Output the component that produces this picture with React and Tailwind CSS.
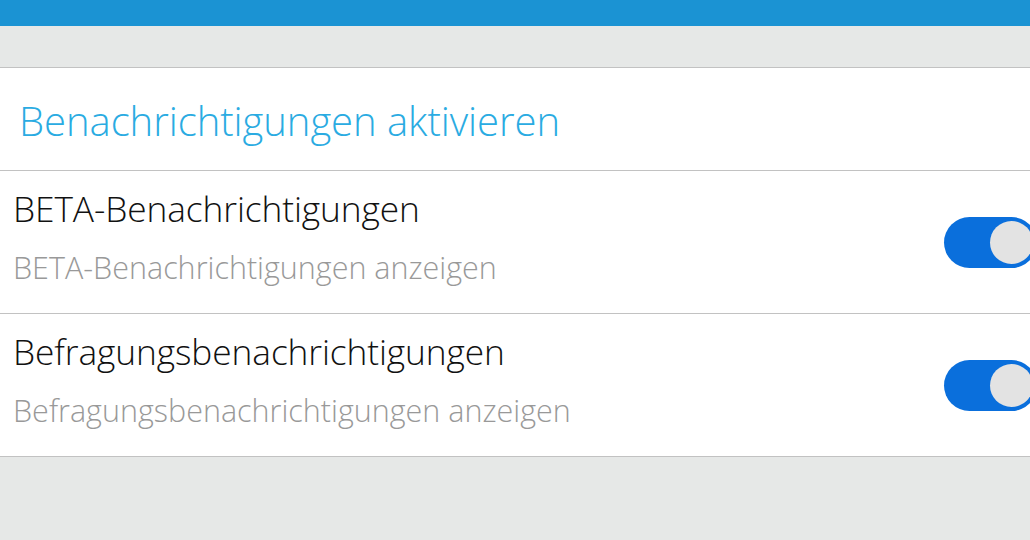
const Toggle = () => (
  <div className="relative mr-[-7px] h-[51px] w-[93px] shrink-0 self-center rounded-full bg-[#0a6fdc]">
    <div className="absolute right-[4px] top-[4px] h-[43px] w-[43px] rounded-full bg-[#e3e3e3]" />
  </div>
);

const SettingRow = ({ title, subtitle }) => (
  <div className="flex h-[143px] justify-between border-b border-[#c2c2c2] bg-white pl-[13px]">
    <div className="flex flex-col pt-[12px]">
      <span className="text-[35.3px] leading-[50px] tracking-[-0.1px] text-[#111]">{title}</span>
      <span className="mt-[7px] text-[30.5px] leading-[54px] text-[#999]">{subtitle}</span>
    </div>
    <Toggle />
  </div>
);

export default function App() {
  return (
    <div
      className="h-[540px] w-[1030px] overflow-hidden bg-[#e6e8e7] font-light"
      style={{ fontFamily: '"Open Sans", sans-serif' }}
    >
      <div className="h-[26px] bg-[#1b93d3]" />
      <div className="h-[41px]" />
      <div className="border-t border-[#c2c2c2]">
        <div className="flex h-[103px] items-center border-b border-[#c2c2c2] bg-white pl-[19px] pt-[4px]">
          <span className="text-[40px] tracking-[-0.05px] text-[#2aabe2]">Benachrichtigungen aktivieren</span>
        </div>
        <SettingRow title="BETA-Benachrichtigungen" subtitle="BETA-Benachrichtigungen anzeigen" />
        <SettingRow title="Befragungsbenachrichtigungen" subtitle="Befragungsbenachrichtigungen anzeigen" />
      </div>
    </div>
  );
}
